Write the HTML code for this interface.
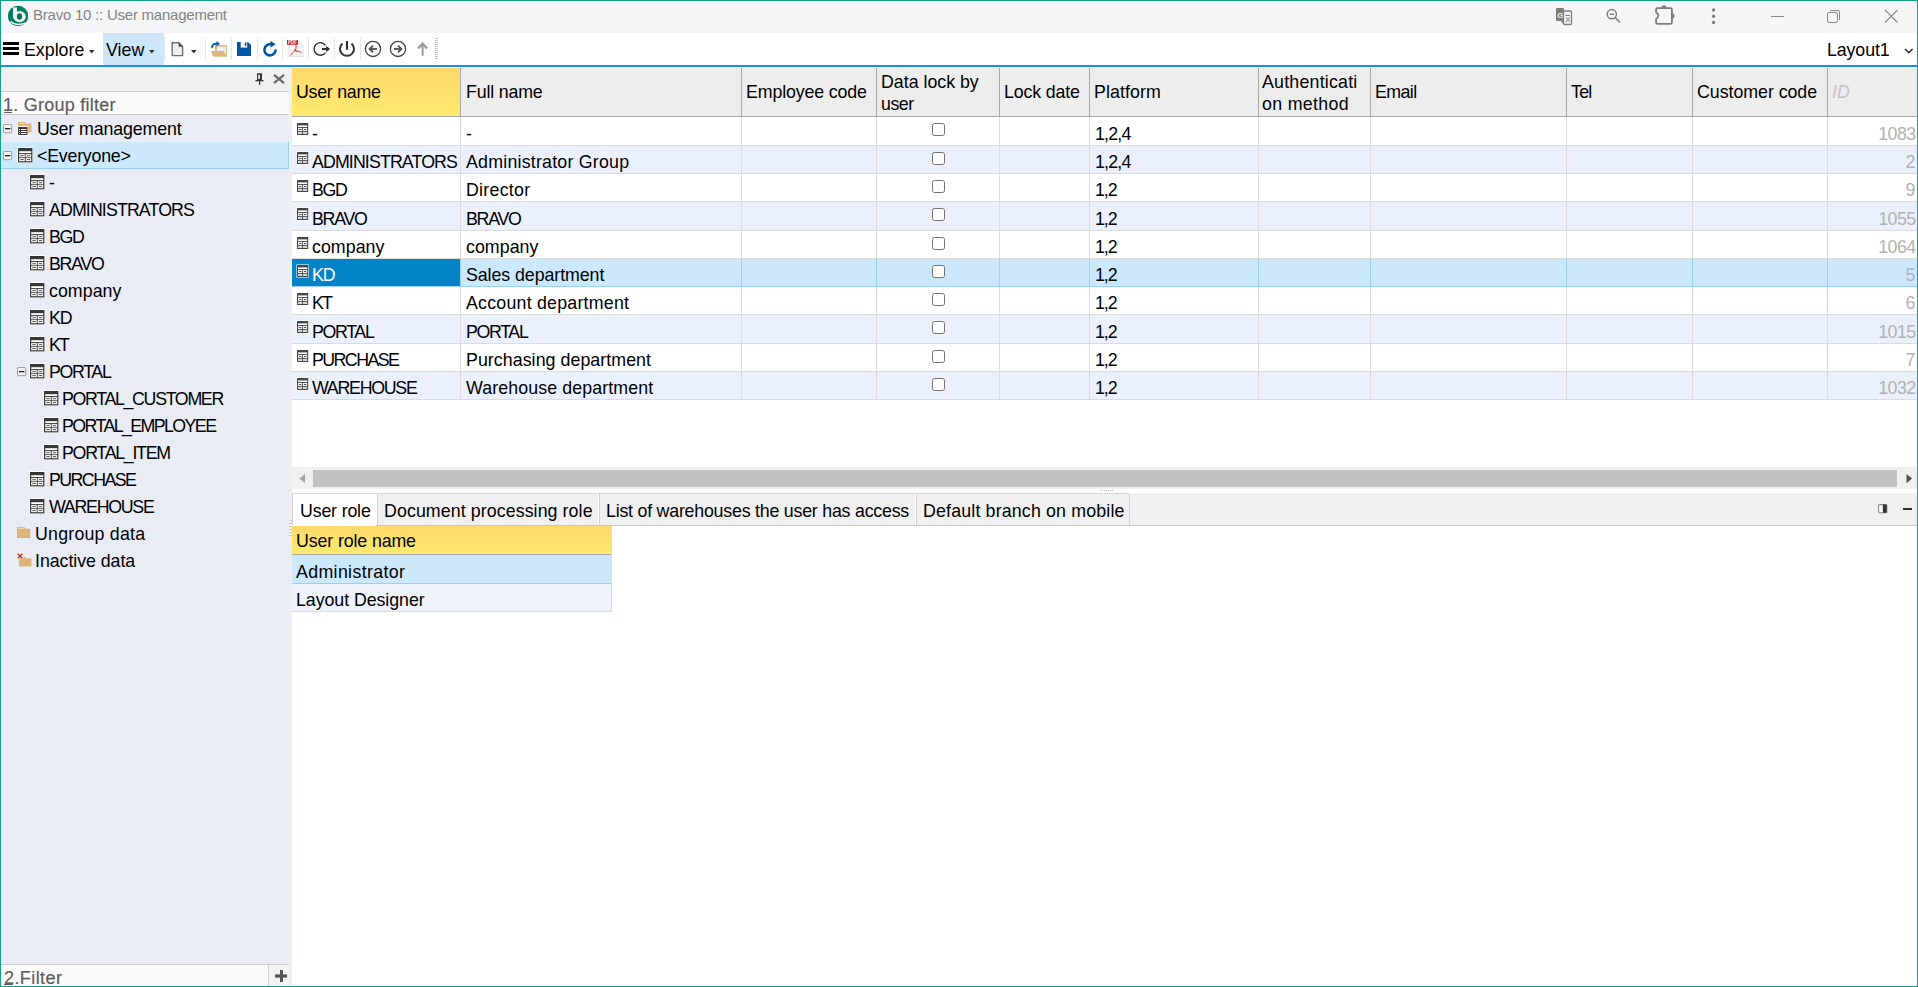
<!DOCTYPE html><html><head><meta charset="utf-8"><title>Bravo 10 :: User management</title><style>

*{box-sizing:border-box;margin:0;padding:0}
html,body{width:1918px;height:987px;overflow:hidden;background:#fff;font-family:"Liberation Sans",sans-serif;color:#000}
.abs{position:absolute}
.t{position:absolute;white-space:nowrap}
svg{overflow:visible}

</style></head><body>
<div class="abs" style="left:1px;top:1px;width:1916px;height:32px;background:#f4f5f7"></div>
<svg class="abs" style="left:7px;top:5px" width="22" height="22" viewBox="0 0 22 22">
<circle cx="11" cy="11" r="10.2" fill="#007a5e"/>
<path d="M11 1 A10 10 0 0 1 21 11 A10 10 0 0 1 18 18 L14 9 Z" fill="#008a68" opacity="0.6"/>
<ellipse cx="12.6" cy="11.6" rx="6.2" ry="5.6" fill="#f2f2f2"/>
<rect x="6" y="2.4" width="4" height="11" fill="#f2f2f2"/>
<ellipse cx="12.5" cy="11.5" rx="2.6" ry="3.3" fill="#00775b"/>
<path d="M3.5 16.5 Q9 21.5 18.5 18" stroke="#f2f2f2" stroke-width="1.6" fill="none"/>
</svg>
<div class="t" style="left:33px;top:4.00px;font-size:15px;line-height:22px;letter-spacing:-0.233px;color:#858585">Bravo 10 :: User management</div>
<svg class="abs" style="left:1555px;top:7px" width="18" height="18" viewBox="0 0 18 18">
<rect x="1" y="1" width="8" height="13" rx="1" fill="#7d7d7d"/>
<text x="2.2" y="10.5" font-size="8" font-family="Liberation Sans" fill="#f4f5f7" font-weight="bold" style="-webkit-font-smoothing:antialiased">G</text>
<rect x="8.5" y="4" width="8" height="13.5" rx="1" fill="#f4f5f7" stroke="#7d7d7d" stroke-width="1.3"/>
<path d="M10.5 8.5 H15 M12.7 8 V9 M11 10 L15 15 M15 10 L11 15" stroke="#7d7d7d" stroke-width="1" fill="none"/>
<path d="M6 14 L8.5 17.5 V14 Z" fill="#7d7d7d"/>
</svg>
<svg class="abs" style="left:1605px;top:8px" width="18" height="18" viewBox="0 0 18 18">
<circle cx="6.8" cy="6.2" r="4.6" stroke="#7d7d7d" stroke-width="1.5" fill="none"/>
<path d="M4.6 6.2 H9" stroke="#7d7d7d" stroke-width="1.5"/>
<path d="M10.2 9.6 L15 14.5" stroke="#7d7d7d" stroke-width="1.6"/>
</svg>
<svg class="abs" style="left:1650px;top:2px" width="26" height="26" viewBox="0 0 26 26">
<path d="M7.6 6.06 H20.4 Q21.9 6.06 21.9 7.56 V20.4 Q21.9 21.9 20.4 21.9 H7.6 Q6.1 21.9 6.1 20.4 V17.1 Q10.6 13.7 6.1 10.3 V7.56 Q6.1 6.06 7.6 6.06 Z" stroke="#7d7d7d" stroke-width="1.8" fill="none"/>
<path d="M12.2 6.06 A1.8 1.8 0 0 1 15.8 6.06 Z" fill="#7d7d7d" stroke="#7d7d7d" stroke-width="1.8" stroke-linejoin="round"/>
<path d="M21.9 12.2 A1.8 1.8 0 0 1 21.9 15.8 Z" fill="#7d7d7d" stroke="#7d7d7d" stroke-width="1.8" stroke-linejoin="round"/>
</svg>
<svg class="abs" style="left:1711px;top:8px" width="6" height="18" viewBox="0 0 6 18"><circle cx="2.6" cy="2" r="1.7" fill="#7d7d7d"/><circle cx="2.6" cy="8.3" r="1.7" fill="#7d7d7d"/><circle cx="2.6" cy="14.5" r="1.7" fill="#7d7d7d"/></svg>
<div class="abs" style="left:1771px;top:16px;width:13px;height:1px;background:#8a8a8a"></div>
<svg class="abs" style="left:1826px;top:9px" width="16" height="16" viewBox="0 0 16 16">
<rect x="1.5" y="3.5" width="10" height="10" rx="1.5" stroke="#8a8a8a" stroke-width="1" fill="none"/>
<path d="M4 1.5 H12 A1.5 1.5 0 0 1 13.5 3 V11" stroke="#8a8a8a" stroke-width="1" fill="none"/>
</svg>
<svg class="abs" style="left:1884px;top:9px" width="15" height="15" viewBox="0 0 15 15"><path d="M1 1 L13.5 13.5 M13.5 1 L1 13.5" stroke="#8a8a8a" stroke-width="1.1"/></svg>
<div class="abs" style="left:1px;top:33px;width:1916px;height:32px;background:#ffffff"></div>
<div class="abs" style="left:103px;top:33px;width:61px;height:32px;background:#cde6f9"></div>
<svg class="abs" style="left:3px;top:42px" width="16" height="13" viewBox="0 0 16 13"><rect x="0" y="0" width="16" height="3" fill="#000"/><rect x="0" y="5" width="16" height="3" fill="#000"/><rect x="0" y="10" width="16" height="3" fill="#000"/></svg>
<div class="t" style="left:24px;top:39.13px;font-size:17.8px;line-height:22px">Explore</div>
<svg class="abs" style="left:89px;top:50px" width="6" height="4" viewBox="0 0 6 4"><path d="M0 0 H5.5 L2.75 3.5 Z" fill="#333"/></svg>
<div class="t" style="left:106px;top:39.13px;font-size:17.8px;line-height:22px;letter-spacing:0.010px">View</div>
<svg class="abs" style="left:149px;top:50px" width="6" height="4" viewBox="0 0 6 4"><path d="M0 0 H5.5 L2.75 3.5 Z" fill="#333"/></svg>
<svg class="abs" style="left:171px;top:42px" width="13" height="15" viewBox="0 0 13 15">
<path d="M1.2 0.8 H8 L11.6 4.4 V13.6 H1.2 Z" fill="#f0f0f2" stroke="#6e6e6e" stroke-width="1.4" stroke-linejoin="round"/>
<path d="M7.6 0.8 L11.6 4.8 H7.6 Z" fill="#444"/>
</svg>
<svg class="abs" style="left:191px;top:50px" width="6" height="4" viewBox="0 0 6 4"><path d="M0 0 H5.6 L2.8 3.6 Z" fill="#333"/></svg>
<svg class="abs" style="left:164px;top:38px" width="2" height="22" viewBox="0 0 2 22"><rect x="0" y="0" width="1" height="1" fill="#cfcfcf"/><rect x="0" y="2" width="1" height="1" fill="#cfcfcf"/><rect x="0" y="4" width="1" height="1" fill="#cfcfcf"/><rect x="0" y="6" width="1" height="1" fill="#cfcfcf"/><rect x="0" y="8" width="1" height="1" fill="#cfcfcf"/><rect x="0" y="10" width="1" height="1" fill="#cfcfcf"/><rect x="0" y="12" width="1" height="1" fill="#cfcfcf"/><rect x="0" y="14" width="1" height="1" fill="#cfcfcf"/><rect x="0" y="16" width="1" height="1" fill="#cfcfcf"/><rect x="0" y="18" width="1" height="1" fill="#cfcfcf"/><rect x="0" y="20" width="1" height="1" fill="#cfcfcf"/></svg>
<svg class="abs" style="left:205px;top:38px" width="2" height="22" viewBox="0 0 2 22"><rect x="0" y="0" width="1" height="1" fill="#cfcfcf"/><rect x="0" y="2" width="1" height="1" fill="#cfcfcf"/><rect x="0" y="4" width="1" height="1" fill="#cfcfcf"/><rect x="0" y="6" width="1" height="1" fill="#cfcfcf"/><rect x="0" y="8" width="1" height="1" fill="#cfcfcf"/><rect x="0" y="10" width="1" height="1" fill="#cfcfcf"/><rect x="0" y="12" width="1" height="1" fill="#cfcfcf"/><rect x="0" y="14" width="1" height="1" fill="#cfcfcf"/><rect x="0" y="16" width="1" height="1" fill="#cfcfcf"/><rect x="0" y="18" width="1" height="1" fill="#cfcfcf"/><rect x="0" y="20" width="1" height="1" fill="#cfcfcf"/></svg>
<svg class="abs" style="left:231px;top:38px" width="2" height="22" viewBox="0 0 2 22"><rect x="0" y="0" width="1" height="1" fill="#cfcfcf"/><rect x="0" y="2" width="1" height="1" fill="#cfcfcf"/><rect x="0" y="4" width="1" height="1" fill="#cfcfcf"/><rect x="0" y="6" width="1" height="1" fill="#cfcfcf"/><rect x="0" y="8" width="1" height="1" fill="#cfcfcf"/><rect x="0" y="10" width="1" height="1" fill="#cfcfcf"/><rect x="0" y="12" width="1" height="1" fill="#cfcfcf"/><rect x="0" y="14" width="1" height="1" fill="#cfcfcf"/><rect x="0" y="16" width="1" height="1" fill="#cfcfcf"/><rect x="0" y="18" width="1" height="1" fill="#cfcfcf"/><rect x="0" y="20" width="1" height="1" fill="#cfcfcf"/></svg>
<svg class="abs" style="left:257px;top:38px" width="2" height="22" viewBox="0 0 2 22"><rect x="0" y="0" width="1" height="1" fill="#cfcfcf"/><rect x="0" y="2" width="1" height="1" fill="#cfcfcf"/><rect x="0" y="4" width="1" height="1" fill="#cfcfcf"/><rect x="0" y="6" width="1" height="1" fill="#cfcfcf"/><rect x="0" y="8" width="1" height="1" fill="#cfcfcf"/><rect x="0" y="10" width="1" height="1" fill="#cfcfcf"/><rect x="0" y="12" width="1" height="1" fill="#cfcfcf"/><rect x="0" y="14" width="1" height="1" fill="#cfcfcf"/><rect x="0" y="16" width="1" height="1" fill="#cfcfcf"/><rect x="0" y="18" width="1" height="1" fill="#cfcfcf"/><rect x="0" y="20" width="1" height="1" fill="#cfcfcf"/></svg>
<svg class="abs" style="left:282px;top:38px" width="2" height="22" viewBox="0 0 2 22"><rect x="0" y="0" width="1" height="1" fill="#cfcfcf"/><rect x="0" y="2" width="1" height="1" fill="#cfcfcf"/><rect x="0" y="4" width="1" height="1" fill="#cfcfcf"/><rect x="0" y="6" width="1" height="1" fill="#cfcfcf"/><rect x="0" y="8" width="1" height="1" fill="#cfcfcf"/><rect x="0" y="10" width="1" height="1" fill="#cfcfcf"/><rect x="0" y="12" width="1" height="1" fill="#cfcfcf"/><rect x="0" y="14" width="1" height="1" fill="#cfcfcf"/><rect x="0" y="16" width="1" height="1" fill="#cfcfcf"/><rect x="0" y="18" width="1" height="1" fill="#cfcfcf"/><rect x="0" y="20" width="1" height="1" fill="#cfcfcf"/></svg>
<svg class="abs" style="left:308px;top:38px" width="2" height="22" viewBox="0 0 2 22"><rect x="0" y="0" width="1" height="1" fill="#cfcfcf"/><rect x="0" y="2" width="1" height="1" fill="#cfcfcf"/><rect x="0" y="4" width="1" height="1" fill="#cfcfcf"/><rect x="0" y="6" width="1" height="1" fill="#cfcfcf"/><rect x="0" y="8" width="1" height="1" fill="#cfcfcf"/><rect x="0" y="10" width="1" height="1" fill="#cfcfcf"/><rect x="0" y="12" width="1" height="1" fill="#cfcfcf"/><rect x="0" y="14" width="1" height="1" fill="#cfcfcf"/><rect x="0" y="16" width="1" height="1" fill="#cfcfcf"/><rect x="0" y="18" width="1" height="1" fill="#cfcfcf"/><rect x="0" y="20" width="1" height="1" fill="#cfcfcf"/></svg>
<svg class="abs" style="left:334px;top:38px" width="2" height="22" viewBox="0 0 2 22"><rect x="0" y="0" width="1" height="1" fill="#cfcfcf"/><rect x="0" y="2" width="1" height="1" fill="#cfcfcf"/><rect x="0" y="4" width="1" height="1" fill="#cfcfcf"/><rect x="0" y="6" width="1" height="1" fill="#cfcfcf"/><rect x="0" y="8" width="1" height="1" fill="#cfcfcf"/><rect x="0" y="10" width="1" height="1" fill="#cfcfcf"/><rect x="0" y="12" width="1" height="1" fill="#cfcfcf"/><rect x="0" y="14" width="1" height="1" fill="#cfcfcf"/><rect x="0" y="16" width="1" height="1" fill="#cfcfcf"/><rect x="0" y="18" width="1" height="1" fill="#cfcfcf"/><rect x="0" y="20" width="1" height="1" fill="#cfcfcf"/></svg>
<svg class="abs" style="left:360px;top:38px" width="2" height="22" viewBox="0 0 2 22"><rect x="0" y="0" width="1" height="1" fill="#cfcfcf"/><rect x="0" y="2" width="1" height="1" fill="#cfcfcf"/><rect x="0" y="4" width="1" height="1" fill="#cfcfcf"/><rect x="0" y="6" width="1" height="1" fill="#cfcfcf"/><rect x="0" y="8" width="1" height="1" fill="#cfcfcf"/><rect x="0" y="10" width="1" height="1" fill="#cfcfcf"/><rect x="0" y="12" width="1" height="1" fill="#cfcfcf"/><rect x="0" y="14" width="1" height="1" fill="#cfcfcf"/><rect x="0" y="16" width="1" height="1" fill="#cfcfcf"/><rect x="0" y="18" width="1" height="1" fill="#cfcfcf"/><rect x="0" y="20" width="1" height="1" fill="#cfcfcf"/></svg>
<svg class="abs" style="left:210px;top:40px" width="18" height="18" viewBox="0 0 18 18">
<path d="M5 5 H17 V16.5 H5 Z" fill="#ddb77c"/>
<path d="M7 6.5 H16 V15 H7 Z" fill="#efeff2"/>
<path d="M1 11 H13.5 L16.8 16.6 H3 Z" fill="#ddb77c"/>
<path d="M2.2 8 C1.5 5 4 3.2 7.5 3.8" stroke="#0a5cb0" stroke-width="2" fill="none"/>
<path d="M6.5 1 L10 3.8 L6.5 6.5 Z" fill="#0a5cb0"/>
</svg>
<svg class="abs" style="left:237px;top:42px" width="14" height="14" viewBox="0 0 14 14">
<path d="M0 0 H11 L14 3 V14 H0 Z" fill="#0055a5"/>
<rect x="3.7" y="0" width="6.5" height="5.6" fill="#fbfbfb"/>
<rect x="7.8" y="0.5" width="1.6" height="3.3" fill="#0055a5"/>
</svg>
<svg class="abs" style="left:263px;top:40px" width="16" height="18" viewBox="0 0 16 18">
<path d="M12.6 9.5 A5.6 5.6 0 1 1 8 4.3" stroke="#0055a5" stroke-width="2.6" fill="none"/>
<path d="M7.5 0.8 L12.5 4.3 L7.5 7.8 Z" fill="#0055a5"/>
</svg>
<svg class="abs" style="left:286px;top:40px" width="18" height="18" viewBox="0 0 18 18">
<path d="M3 1 H13 L17 5 V16.6 H3 Z" fill="#f3f3f3" stroke="#d5d5d5" stroke-width="0.8"/>
<rect x="1" y="0" width="11" height="4.7" fill="#c8101a"/>
<text x="2" y="4.2" font-size="4.5" font-family="Liberation Sans" font-weight="bold" fill="#fff">PDF</text>
<path d="M10 5 Q10.5 9 9 10.5 Q6 13 4.5 15.5 M9 10.5 Q12 11 15.5 12.5 M8 9.5 Q9.5 11 11 12" stroke="#e8242c" stroke-width="0.9" fill="none"/>
</svg>
<svg class="abs" style="left:313px;top:41px" width="18" height="16" viewBox="0 0 18 16">
<path d="M12.5 4.3 A6.3 6.3 0 1 0 12.5 11.6" stroke="#333" stroke-width="1.4" fill="none"/>
<path d="M9 8 H16" stroke="#333" stroke-width="2.2"/>
<path d="M13.2 4.8 L17 8 L13.2 11.2 Z" fill="#333"/>
</svg>
<svg class="abs" style="left:338px;top:40px" width="18" height="18" viewBox="0 0 18 18">
<path d="M4.5 3.5 A7 7 0 1 0 13.5 3.5" stroke="#333" stroke-width="2" fill="none"/>
<path d="M9 1 V9.8" stroke="#333" stroke-width="2.1"/>
</svg>
<svg class="abs" style="left:364px;top:40px" width="18" height="18" viewBox="0 0 18 18">
<circle cx="9" cy="8.9" r="7.6" stroke="#444" stroke-width="1.3" fill="none"/>
<path d="M6.5 8.9 H13" stroke="#555" stroke-width="2"/>
<path d="M9 5.6 L5.6 8.9 L9 12.2" stroke="#555" stroke-width="1.9" fill="none"/>
</svg>
<svg class="abs" style="left:389px;top:40px" width="18" height="18" viewBox="0 0 18 18">
<circle cx="9" cy="8.9" r="7.6" stroke="#444" stroke-width="1.3" fill="none"/>
<path d="M5 8.9 H11.5" stroke="#555" stroke-width="2"/>
<path d="M9 5.6 L12.4 8.9 L9 12.2" stroke="#555" stroke-width="1.9" fill="none"/>
</svg>
<svg class="abs" style="left:417px;top:42px" width="12" height="15" viewBox="0 0 12 15">
<path d="M5.6 2 V13.8" stroke="#9a9a9a" stroke-width="2"/>
<path d="M1.2 6.5 L5.6 1.5 L10 6.5" stroke="#9a9a9a" stroke-width="2.2" fill="none"/>
</svg>
<svg class="abs" style="left:435px;top:38px" width="3" height="22" viewBox="0 0 3 22"><rect x="0" y="0" width="3" height="1" fill="#c4c4c4"/><rect x="0" y="2" width="3" height="1" fill="#c4c4c4"/><rect x="0" y="4" width="3" height="1" fill="#c4c4c4"/><rect x="0" y="6" width="3" height="1" fill="#c4c4c4"/><rect x="0" y="8" width="3" height="1" fill="#c4c4c4"/><rect x="0" y="10" width="3" height="1" fill="#c4c4c4"/><rect x="0" y="12" width="3" height="1" fill="#c4c4c4"/><rect x="0" y="14" width="3" height="1" fill="#c4c4c4"/><rect x="0" y="16" width="3" height="1" fill="#c4c4c4"/><rect x="0" y="18" width="3" height="1" fill="#c4c4c4"/><rect x="0" y="20" width="3" height="1" fill="#c4c4c4"/></svg>
<div class="t" style="left:1827px;top:39.13px;font-size:17.8px;line-height:22px;letter-spacing:-0.105px">Layout1</div>
<svg class="abs" style="left:1904px;top:48px" width="10" height="6" viewBox="0 0 10 6"><path d="M1 1 L4.8 4.6 L8.6 1" stroke="#111" stroke-width="1.3" fill="none"/></svg>
<div class="abs" style="left:1px;top:65px;width:1916px;height:2px;background:#1a8cf2"></div>
<div class="abs" style="left:1px;top:67px;width:288px;height:24px;background:#f0f0f0"></div>
<div class="abs" style="left:1px;top:91px;width:288px;height:1px;background:#cdcdcd"></div>
<svg class="abs" style="left:255px;top:73px" width="10" height="13" viewBox="0 0 10 13">
<rect x="2" y="0.3" width="5" height="7" fill="#333"/>
<rect x="3.2" y="1.8" width="1.6" height="4.2" fill="#fff"/>
<rect x="0.5" y="7" width="8" height="1.3" fill="#333"/>
<rect x="4" y="8" width="1.2" height="4" fill="#333"/>
</svg>
<svg class="abs" style="left:273px;top:74px" width="12" height="10" viewBox="0 0 12 10"><path d="M1 0.8 L11 9.2 M11 0.8 L1 9.2" stroke="#6a6a6a" stroke-width="2.2"/></svg>
<div class="abs" style="left:1px;top:92px;width:288px;height:22px;background:#fafafa"></div>
<div class="abs" style="left:1px;top:114px;width:288px;height:1px;background:#cdcdcd"></div>
<div class="t" style="left:3px;top:93.76px;font-size:18px;line-height:22px;letter-spacing:0.251px;color:#5e5e5e;-webkit-text-stroke:0.2px #606060">1. Group filter</div>
<div class="abs" style="left:4px;top:112px;width:8px;height:1px;background:#5e5e5e"></div>
<div class="abs" style="left:1px;top:115px;width:288px;height:849px;background:#e9ecf4"></div>
<div class="abs" style="left:1px;top:964px;width:288px;height:1px;background:#cdcdcd"></div>
<div class="abs" style="left:1px;top:965px;width:288px;height:21px;background:#fafafa"></div>
<div class="t" style="left:4px;top:967.16px;font-size:18px;line-height:22px;letter-spacing:0.412px;color:#5e5e5e;-webkit-text-stroke:0.2px #606060">2.Filter</div>
<div class="abs" style="left:4px;top:984px;width:9px;height:1px;background:#5e5e5e"></div>
<div class="abs" style="left:268px;top:965px;width:1px;height:21px;background:#cdcdcd"></div>
<div class="abs" style="left:269px;top:965px;width:20px;height:21px;background:#f4f4f4"></div>
<svg class="abs" style="left:275px;top:970px" width="13" height="13" viewBox="0 0 13 13"><rect x="0" y="4.4" width="12" height="3.2" fill="#555"/><rect x="5" y="0" width="3" height="12" fill="#555"/></svg>
<div class="abs" style="left:289px;top:67px;width:3px;height:919px;background:#efefef"></div>
<svg class="abs" style="left:3px;top:124px" width="9" height="9" viewBox="0 0 9 9">
<rect x="0.5" y="0.5" width="8.2" height="8.2" rx="0.8" fill="#f2f2f2" stroke="#9d9d9d" stroke-width="1"/>
<rect x="2" y="4" width="5.4" height="1.3" fill="#222"/>
</svg>
<svg class="abs" style="left:18px;top:121px" width="15" height="15" viewBox="0 0 15 15">
<path d="M0 1 H7 L8 2.5 H13.4 V11.5 H0 Z" fill="#ddb77c"/>
<rect x="1" y="1.8" width="5.5" height="1" fill="#efd9b0"/>
<rect x="-1" y="5" width="11" height="10" fill="#fff" opacity="0.9"/>
<rect x="0" y="6" width="9.5" height="8" rx="0.5" fill="#383838"/>
<rect x="1" y="8" width="1" height="1" fill="#fff"/><rect x="3" y="8" width="5.5" height="1" fill="#fff"/>
<rect x="1" y="10" width="1" height="1" fill="#fff"/><rect x="3" y="10" width="5.5" height="1" fill="#fff"/>
<rect x="1" y="12" width="1" height="1" fill="#fff"/><rect x="3" y="12" width="5.5" height="1" fill="#fff"/>
</svg>
<div class="t" style="left:37px;top:117.83px;font-size:17.8px;line-height:22px;letter-spacing:-0.108px">User management</div>
<div class="abs" style="left:1px;top:142px;width:288px;height:27px;background:#cce8fb;border-bottom:1px solid #99d1f5;border-right:1px solid #99d1f5"></div>
<svg class="abs" style="left:3px;top:151px" width="9" height="9" viewBox="0 0 9 9">
<rect x="0.5" y="0.5" width="8.2" height="8.2" rx="0.8" fill="#f2f2f2" stroke="#9d9d9d" stroke-width="1"/>
<rect x="2" y="4" width="5.4" height="1.3" fill="#222"/>
</svg>
<svg class="abs" style="left:18px;top:148px" width="15" height="15" viewBox="0 0 15 15">
<rect x="-1" y="-1" width="16" height="16" fill="#fff" opacity="0.85"/>
<rect x="0" y="0" width="14.4" height="14.4" fill="#383838"/>
<rect x="1.2" y="3.2" width="12" height="1.9" fill="#fff"/>
<rect x="1.2" y="6.1" width="5.6" height="3.2" fill="#fff"/>
<rect x="7.7" y="6.1" width="5.5" height="3.2" fill="#fff"/>
<rect x="1.2" y="10.1" width="5.6" height="3.1" fill="#fff"/>
<rect x="7.7" y="10.1" width="5.5" height="3.1" fill="#fff"/>
<rect x="2.3" y="7.3" width="3.4" height="0.9" fill="#383838"/>
<rect x="8.8" y="7.3" width="3.4" height="0.9" fill="#383838"/>
<rect x="2.3" y="11.2" width="3.4" height="0.9" fill="#383838"/>
<rect x="8.8" y="11.2" width="3.4" height="0.9" fill="#383838"/>
</svg>
<div class="t" style="left:37px;top:144.83px;font-size:17.8px;line-height:22px;letter-spacing:-0.219px">&lt;Everyone&gt;</div>
<svg class="abs" style="left:30px;top:175px" width="15" height="15" viewBox="0 0 15 15">
<rect x="-1" y="-1" width="16" height="16" fill="#fff" opacity="0.85"/>
<rect x="0" y="0" width="14.4" height="14.4" fill="#383838"/>
<rect x="1.2" y="3.2" width="12" height="1.9" fill="#fff"/>
<rect x="1.2" y="6.1" width="5.6" height="3.2" fill="#fff"/>
<rect x="7.7" y="6.1" width="5.5" height="3.2" fill="#fff"/>
<rect x="1.2" y="10.1" width="5.6" height="3.1" fill="#fff"/>
<rect x="7.7" y="10.1" width="5.5" height="3.1" fill="#fff"/>
<rect x="2.3" y="7.3" width="3.4" height="0.9" fill="#383838"/>
<rect x="8.8" y="7.3" width="3.4" height="0.9" fill="#383838"/>
<rect x="2.3" y="11.2" width="3.4" height="0.9" fill="#383838"/>
<rect x="8.8" y="11.2" width="3.4" height="0.9" fill="#383838"/>
</svg>
<div class="t" style="left:49px;top:171.83px;font-size:17.8px;line-height:22px">-</div>
<svg class="abs" style="left:30px;top:202px" width="15" height="15" viewBox="0 0 15 15">
<rect x="-1" y="-1" width="16" height="16" fill="#fff" opacity="0.85"/>
<rect x="0" y="0" width="14.4" height="14.4" fill="#383838"/>
<rect x="1.2" y="3.2" width="12" height="1.9" fill="#fff"/>
<rect x="1.2" y="6.1" width="5.6" height="3.2" fill="#fff"/>
<rect x="7.7" y="6.1" width="5.5" height="3.2" fill="#fff"/>
<rect x="1.2" y="10.1" width="5.6" height="3.1" fill="#fff"/>
<rect x="7.7" y="10.1" width="5.5" height="3.1" fill="#fff"/>
<rect x="2.3" y="7.3" width="3.4" height="0.9" fill="#383838"/>
<rect x="8.8" y="7.3" width="3.4" height="0.9" fill="#383838"/>
<rect x="2.3" y="11.2" width="3.4" height="0.9" fill="#383838"/>
<rect x="8.8" y="11.2" width="3.4" height="0.9" fill="#383838"/>
</svg>
<div class="t" style="left:49px;top:198.83px;font-size:17.8px;line-height:22px;letter-spacing:-0.884px">ADMINISTRATORS</div>
<svg class="abs" style="left:30px;top:229px" width="15" height="15" viewBox="0 0 15 15">
<rect x="-1" y="-1" width="16" height="16" fill="#fff" opacity="0.85"/>
<rect x="0" y="0" width="14.4" height="14.4" fill="#383838"/>
<rect x="1.2" y="3.2" width="12" height="1.9" fill="#fff"/>
<rect x="1.2" y="6.1" width="5.6" height="3.2" fill="#fff"/>
<rect x="7.7" y="6.1" width="5.5" height="3.2" fill="#fff"/>
<rect x="1.2" y="10.1" width="5.6" height="3.1" fill="#fff"/>
<rect x="7.7" y="10.1" width="5.5" height="3.1" fill="#fff"/>
<rect x="2.3" y="7.3" width="3.4" height="0.9" fill="#383838"/>
<rect x="8.8" y="7.3" width="3.4" height="0.9" fill="#383838"/>
<rect x="2.3" y="11.2" width="3.4" height="0.9" fill="#383838"/>
<rect x="8.8" y="11.2" width="3.4" height="0.9" fill="#383838"/>
</svg>
<div class="t" style="left:49px;top:225.83px;font-size:17.8px;line-height:22px;letter-spacing:-1.358px">BGD</div>
<svg class="abs" style="left:30px;top:256px" width="15" height="15" viewBox="0 0 15 15">
<rect x="-1" y="-1" width="16" height="16" fill="#fff" opacity="0.85"/>
<rect x="0" y="0" width="14.4" height="14.4" fill="#383838"/>
<rect x="1.2" y="3.2" width="12" height="1.9" fill="#fff"/>
<rect x="1.2" y="6.1" width="5.6" height="3.2" fill="#fff"/>
<rect x="7.7" y="6.1" width="5.5" height="3.2" fill="#fff"/>
<rect x="1.2" y="10.1" width="5.6" height="3.1" fill="#fff"/>
<rect x="7.7" y="10.1" width="5.5" height="3.1" fill="#fff"/>
<rect x="2.3" y="7.3" width="3.4" height="0.9" fill="#383838"/>
<rect x="8.8" y="7.3" width="3.4" height="0.9" fill="#383838"/>
<rect x="2.3" y="11.2" width="3.4" height="0.9" fill="#383838"/>
<rect x="8.8" y="11.2" width="3.4" height="0.9" fill="#383838"/>
</svg>
<div class="t" style="left:49px;top:252.83px;font-size:17.8px;line-height:22px;letter-spacing:-1.260px">BRAVO</div>
<svg class="abs" style="left:30px;top:283px" width="15" height="15" viewBox="0 0 15 15">
<rect x="-1" y="-1" width="16" height="16" fill="#fff" opacity="0.85"/>
<rect x="0" y="0" width="14.4" height="14.4" fill="#383838"/>
<rect x="1.2" y="3.2" width="12" height="1.9" fill="#fff"/>
<rect x="1.2" y="6.1" width="5.6" height="3.2" fill="#fff"/>
<rect x="7.7" y="6.1" width="5.5" height="3.2" fill="#fff"/>
<rect x="1.2" y="10.1" width="5.6" height="3.1" fill="#fff"/>
<rect x="7.7" y="10.1" width="5.5" height="3.1" fill="#fff"/>
<rect x="2.3" y="7.3" width="3.4" height="0.9" fill="#383838"/>
<rect x="8.8" y="7.3" width="3.4" height="0.9" fill="#383838"/>
<rect x="2.3" y="11.2" width="3.4" height="0.9" fill="#383838"/>
<rect x="8.8" y="11.2" width="3.4" height="0.9" fill="#383838"/>
</svg>
<div class="t" style="left:49px;top:279.83px;font-size:17.8px;line-height:22px;letter-spacing:0.040px">company</div>
<svg class="abs" style="left:30px;top:310px" width="15" height="15" viewBox="0 0 15 15">
<rect x="-1" y="-1" width="16" height="16" fill="#fff" opacity="0.85"/>
<rect x="0" y="0" width="14.4" height="14.4" fill="#383838"/>
<rect x="1.2" y="3.2" width="12" height="1.9" fill="#fff"/>
<rect x="1.2" y="6.1" width="5.6" height="3.2" fill="#fff"/>
<rect x="7.7" y="6.1" width="5.5" height="3.2" fill="#fff"/>
<rect x="1.2" y="10.1" width="5.6" height="3.1" fill="#fff"/>
<rect x="7.7" y="10.1" width="5.5" height="3.1" fill="#fff"/>
<rect x="2.3" y="7.3" width="3.4" height="0.9" fill="#383838"/>
<rect x="8.8" y="7.3" width="3.4" height="0.9" fill="#383838"/>
<rect x="2.3" y="11.2" width="3.4" height="0.9" fill="#383838"/>
<rect x="8.8" y="11.2" width="3.4" height="0.9" fill="#383838"/>
</svg>
<div class="t" style="left:49px;top:306.83px;font-size:17.8px;line-height:22px;letter-spacing:-1.164px">KD</div>
<svg class="abs" style="left:30px;top:337px" width="15" height="15" viewBox="0 0 15 15">
<rect x="-1" y="-1" width="16" height="16" fill="#fff" opacity="0.85"/>
<rect x="0" y="0" width="14.4" height="14.4" fill="#383838"/>
<rect x="1.2" y="3.2" width="12" height="1.9" fill="#fff"/>
<rect x="1.2" y="6.1" width="5.6" height="3.2" fill="#fff"/>
<rect x="7.7" y="6.1" width="5.5" height="3.2" fill="#fff"/>
<rect x="1.2" y="10.1" width="5.6" height="3.1" fill="#fff"/>
<rect x="7.7" y="10.1" width="5.5" height="3.1" fill="#fff"/>
<rect x="2.3" y="7.3" width="3.4" height="0.9" fill="#383838"/>
<rect x="8.8" y="7.3" width="3.4" height="0.9" fill="#383838"/>
<rect x="2.3" y="11.2" width="3.4" height="0.9" fill="#383838"/>
<rect x="8.8" y="11.2" width="3.4" height="0.9" fill="#383838"/>
</svg>
<div class="t" style="left:49px;top:333.83px;font-size:17.8px;line-height:22px;letter-spacing:-1.823px">KT</div>
<svg class="abs" style="left:17px;top:367px" width="9" height="9" viewBox="0 0 9 9">
<rect x="0.5" y="0.5" width="8.2" height="8.2" rx="0.8" fill="#f2f2f2" stroke="#9d9d9d" stroke-width="1"/>
<rect x="2" y="4" width="5.4" height="1.3" fill="#222"/>
</svg>
<svg class="abs" style="left:30px;top:364px" width="15" height="15" viewBox="0 0 15 15">
<rect x="-1" y="-1" width="16" height="16" fill="#fff" opacity="0.85"/>
<rect x="0" y="0" width="14.4" height="14.4" fill="#383838"/>
<rect x="1.2" y="3.2" width="12" height="1.9" fill="#fff"/>
<rect x="1.2" y="6.1" width="5.6" height="3.2" fill="#fff"/>
<rect x="7.7" y="6.1" width="5.5" height="3.2" fill="#fff"/>
<rect x="1.2" y="10.1" width="5.6" height="3.1" fill="#fff"/>
<rect x="7.7" y="10.1" width="5.5" height="3.1" fill="#fff"/>
<rect x="2.3" y="7.3" width="3.4" height="0.9" fill="#383838"/>
<rect x="8.8" y="7.3" width="3.4" height="0.9" fill="#383838"/>
<rect x="2.3" y="11.2" width="3.4" height="0.9" fill="#383838"/>
<rect x="8.8" y="11.2" width="3.4" height="0.9" fill="#383838"/>
</svg>
<div class="t" style="left:49px;top:360.83px;font-size:17.8px;line-height:22px;letter-spacing:-1.345px">PORTAL</div>
<svg class="abs" style="left:44px;top:391px" width="15" height="15" viewBox="0 0 15 15">
<rect x="-1" y="-1" width="16" height="16" fill="#fff" opacity="0.85"/>
<rect x="0" y="0" width="14.4" height="14.4" fill="#383838"/>
<rect x="1.2" y="3.2" width="12" height="1.9" fill="#fff"/>
<rect x="1.2" y="6.1" width="5.6" height="3.2" fill="#fff"/>
<rect x="7.7" y="6.1" width="5.5" height="3.2" fill="#fff"/>
<rect x="1.2" y="10.1" width="5.6" height="3.1" fill="#fff"/>
<rect x="7.7" y="10.1" width="5.5" height="3.1" fill="#fff"/>
<rect x="2.3" y="7.3" width="3.4" height="0.9" fill="#383838"/>
<rect x="8.8" y="7.3" width="3.4" height="0.9" fill="#383838"/>
<rect x="2.3" y="11.2" width="3.4" height="0.9" fill="#383838"/>
<rect x="8.8" y="11.2" width="3.4" height="0.9" fill="#383838"/>
</svg>
<div class="t" style="left:62px;top:387.83px;font-size:17.8px;line-height:22px;letter-spacing:-1.327px">PORTAL_CUSTOMER</div>
<svg class="abs" style="left:44px;top:418px" width="15" height="15" viewBox="0 0 15 15">
<rect x="-1" y="-1" width="16" height="16" fill="#fff" opacity="0.85"/>
<rect x="0" y="0" width="14.4" height="14.4" fill="#383838"/>
<rect x="1.2" y="3.2" width="12" height="1.9" fill="#fff"/>
<rect x="1.2" y="6.1" width="5.6" height="3.2" fill="#fff"/>
<rect x="7.7" y="6.1" width="5.5" height="3.2" fill="#fff"/>
<rect x="1.2" y="10.1" width="5.6" height="3.1" fill="#fff"/>
<rect x="7.7" y="10.1" width="5.5" height="3.1" fill="#fff"/>
<rect x="2.3" y="7.3" width="3.4" height="0.9" fill="#383838"/>
<rect x="8.8" y="7.3" width="3.4" height="0.9" fill="#383838"/>
<rect x="2.3" y="11.2" width="3.4" height="0.9" fill="#383838"/>
<rect x="8.8" y="11.2" width="3.4" height="0.9" fill="#383838"/>
</svg>
<div class="t" style="left:62px;top:414.83px;font-size:17.8px;line-height:22px;letter-spacing:-1.587px">PORTAL_EMPLOYEE</div>
<svg class="abs" style="left:44px;top:445px" width="15" height="15" viewBox="0 0 15 15">
<rect x="-1" y="-1" width="16" height="16" fill="#fff" opacity="0.85"/>
<rect x="0" y="0" width="14.4" height="14.4" fill="#383838"/>
<rect x="1.2" y="3.2" width="12" height="1.9" fill="#fff"/>
<rect x="1.2" y="6.1" width="5.6" height="3.2" fill="#fff"/>
<rect x="7.7" y="6.1" width="5.5" height="3.2" fill="#fff"/>
<rect x="1.2" y="10.1" width="5.6" height="3.1" fill="#fff"/>
<rect x="7.7" y="10.1" width="5.5" height="3.1" fill="#fff"/>
<rect x="2.3" y="7.3" width="3.4" height="0.9" fill="#383838"/>
<rect x="8.8" y="7.3" width="3.4" height="0.9" fill="#383838"/>
<rect x="2.3" y="11.2" width="3.4" height="0.9" fill="#383838"/>
<rect x="8.8" y="11.2" width="3.4" height="0.9" fill="#383838"/>
</svg>
<div class="t" style="left:62px;top:441.83px;font-size:17.8px;line-height:22px;letter-spacing:-1.281px">PORTAL_ITEM</div>
<svg class="abs" style="left:30px;top:472px" width="15" height="15" viewBox="0 0 15 15">
<rect x="-1" y="-1" width="16" height="16" fill="#fff" opacity="0.85"/>
<rect x="0" y="0" width="14.4" height="14.4" fill="#383838"/>
<rect x="1.2" y="3.2" width="12" height="1.9" fill="#fff"/>
<rect x="1.2" y="6.1" width="5.6" height="3.2" fill="#fff"/>
<rect x="7.7" y="6.1" width="5.5" height="3.2" fill="#fff"/>
<rect x="1.2" y="10.1" width="5.6" height="3.1" fill="#fff"/>
<rect x="7.7" y="10.1" width="5.5" height="3.1" fill="#fff"/>
<rect x="2.3" y="7.3" width="3.4" height="0.9" fill="#383838"/>
<rect x="8.8" y="7.3" width="3.4" height="0.9" fill="#383838"/>
<rect x="2.3" y="11.2" width="3.4" height="0.9" fill="#383838"/>
<rect x="8.8" y="11.2" width="3.4" height="0.9" fill="#383838"/>
</svg>
<div class="t" style="left:49px;top:468.83px;font-size:17.8px;line-height:22px;letter-spacing:-1.564px">PURCHASE</div>
<svg class="abs" style="left:30px;top:499px" width="15" height="15" viewBox="0 0 15 15">
<rect x="-1" y="-1" width="16" height="16" fill="#fff" opacity="0.85"/>
<rect x="0" y="0" width="14.4" height="14.4" fill="#383838"/>
<rect x="1.2" y="3.2" width="12" height="1.9" fill="#fff"/>
<rect x="1.2" y="6.1" width="5.6" height="3.2" fill="#fff"/>
<rect x="7.7" y="6.1" width="5.5" height="3.2" fill="#fff"/>
<rect x="1.2" y="10.1" width="5.6" height="3.1" fill="#fff"/>
<rect x="7.7" y="10.1" width="5.5" height="3.1" fill="#fff"/>
<rect x="2.3" y="7.3" width="3.4" height="0.9" fill="#383838"/>
<rect x="8.8" y="7.3" width="3.4" height="0.9" fill="#383838"/>
<rect x="2.3" y="11.2" width="3.4" height="0.9" fill="#383838"/>
<rect x="8.8" y="11.2" width="3.4" height="0.9" fill="#383838"/>
</svg>
<div class="t" style="left:49px;top:495.83px;font-size:17.8px;line-height:22px;letter-spacing:-1.261px">WAREHOUSE</div>
<svg class="abs" style="left:17px;top:527px" width="14" height="12" viewBox="0 0 14 12"><path d="M0 0 H7.5 L8.5 1.8 H13.3 V11 H0 Z" fill="#dcb478"/><rect x="1" y="0.8" width="6" height="0.9" fill="#f1dfbf"/></svg>
<div class="t" style="left:35px;top:522.83px;font-size:17.8px;line-height:22px;letter-spacing:0.212px">Ungroup data</div>
<svg class="abs" style="left:17px;top:553px" width="15" height="14" viewBox="0 0 15 14">
<path d="M2 4 H8.5 L9.5 5.5 H14.4 V13.4 H2 Z" fill="#dcb478"/>
<path d="M0.6 0.6 L5.6 5.4 M5.6 0.6 L0.6 5.4" stroke="#fff" stroke-width="2.6"/>
<path d="M0.8 0.8 L5.4 5.2 M5.4 0.8 L0.8 5.2" stroke="#b5301f" stroke-width="1.5"/>
</svg>
<div class="t" style="left:35px;top:549.83px;font-size:17.8px;line-height:22px;letter-spacing:-0.056px">Inactive data</div>
<div class="abs" style="left:292px;top:67px;width:1625px;height:1px;background:#ffffff"></div>
<div class="abs" style="left:292px;top:68px;width:1625px;height:48px;background:#ededed"></div>
<div class="abs" style="left:292px;top:68px;width:168px;height:48px;background:linear-gradient(#fdd96b,#feea6f)"></div>
<div class="abs" style="left:292px;top:116px;width:1625px;height:1px;background:#a9a9a9"></div>
<div class="abs" style="left:460px;top:68px;width:1px;height:48px;background:#a9a9a9"></div>
<div class="abs" style="left:741px;top:68px;width:1px;height:48px;background:#a9a9a9"></div>
<div class="abs" style="left:876px;top:68px;width:1px;height:48px;background:#a9a9a9"></div>
<div class="abs" style="left:999px;top:68px;width:1px;height:48px;background:#a9a9a9"></div>
<div class="abs" style="left:1089px;top:68px;width:1px;height:48px;background:#a9a9a9"></div>
<div class="abs" style="left:1258px;top:68px;width:1px;height:48px;background:#a9a9a9"></div>
<div class="abs" style="left:1370px;top:68px;width:1px;height:48px;background:#a9a9a9"></div>
<div class="abs" style="left:1566px;top:68px;width:1px;height:48px;background:#a9a9a9"></div>
<div class="abs" style="left:1692px;top:68px;width:1px;height:48px;background:#a9a9a9"></div>
<div class="abs" style="left:1827px;top:68px;width:1px;height:48px;background:#a9a9a9"></div>
<div class="t" style="left:296px;top:81.23px;font-size:17.8px;line-height:22px;letter-spacing:-0.261px">User name</div>
<div class="t" style="left:466px;top:81.23px;font-size:17.8px;line-height:22px;letter-spacing:-0.172px">Full name</div>
<div class="t" style="left:746px;top:81.23px;font-size:17.8px;line-height:22px;letter-spacing:-0.138px">Employee code</div>
<div class="t" style="left:881px;top:70.63px;font-size:17.8px;line-height:22px;letter-spacing:-0.012px">Data lock by</div>
<div class="t" style="left:881px;top:93.13px;font-size:17.8px;line-height:22px;letter-spacing:-0.481px">user</div>
<div class="t" style="left:1004px;top:81.23px;font-size:17.8px;line-height:22px;letter-spacing:-0.154px">Lock date</div>
<div class="t" style="left:1094px;top:81.23px;font-size:17.8px;line-height:22px;letter-spacing:0.104px">Platform</div>
<div class="t" style="left:1262px;top:70.63px;font-size:17.8px;line-height:22px;letter-spacing:0.216px">Authenticati</div>
<div class="t" style="left:1262px;top:93.13px;font-size:17.8px;line-height:22px;letter-spacing:0.332px">on method</div>
<div class="t" style="left:1375px;top:81.23px;font-size:17.8px;line-height:22px;letter-spacing:-0.562px">Email</div>
<div class="t" style="left:1571px;top:81.23px;font-size:17.8px;line-height:22px;letter-spacing:-0.718px">Tel</div>
<div class="t" style="left:1697px;top:81.23px;font-size:17.8px;line-height:22px;letter-spacing:-0.038px">Customer code</div>
<div class="t" style="left:1832px;top:81.23px;font-size:17.8px;line-height:22px;letter-spacing:0.150px;color:#c4c4c4;font-style:italic">ID</div>
<div class="abs" style="left:292px;top:117px;width:1625px;height:28px;background:#ffffff"></div>
<div class="abs" style="left:292px;top:145px;width:1625px;height:1px;background:#dcdcdc"></div>
<div class="abs" style="left:460px;top:117px;width:1px;height:28px;background:#dcdcdc"></div>
<div class="abs" style="left:741px;top:117px;width:1px;height:28px;background:#dcdcdc"></div>
<div class="abs" style="left:876px;top:117px;width:1px;height:28px;background:#dcdcdc"></div>
<div class="abs" style="left:999px;top:117px;width:1px;height:28px;background:#dcdcdc"></div>
<div class="abs" style="left:1089px;top:117px;width:1px;height:28px;background:#dcdcdc"></div>
<div class="abs" style="left:1258px;top:117px;width:1px;height:28px;background:#dcdcdc"></div>
<div class="abs" style="left:1370px;top:117px;width:1px;height:28px;background:#dcdcdc"></div>
<div class="abs" style="left:1566px;top:117px;width:1px;height:28px;background:#dcdcdc"></div>
<div class="abs" style="left:1692px;top:117px;width:1px;height:28px;background:#dcdcdc"></div>
<div class="abs" style="left:1827px;top:117px;width:1px;height:28px;background:#dcdcdc"></div>
<svg class="abs" style="left:297px;top:123px" width="12" height="12" viewBox="0 0 12 12">
<rect x="-0.6" y="-0.6" width="12.4" height="13.2" fill="#fff" opacity="0.9"/>
<rect x="0" y="0" width="11.2" height="12" rx="0.4" fill="#454545"/>
<rect x="1" y="2.4" width="9.2" height="1.6" fill="#fff"/>
<rect x="1" y="4.9" width="4.2" height="3" fill="#fff"/>
<rect x="6" y="4.9" width="4.2" height="3" fill="#fff"/>
<rect x="1.8" y="6" width="2.6" height="0.9" fill="#454545"/>
<rect x="6.8" y="6" width="2.6" height="0.9" fill="#454545"/>
<rect x="1" y="8.8" width="4.2" height="2.2" fill="#d4d4d4"/>
<rect x="6" y="8.8" width="4.2" height="2.2" fill="#d4d4d4"/>
</svg>
<div class="t" style="left:312px;top:122.83px;font-size:17.8px;line-height:22px">-</div>
<div class="t" style="left:466px;top:122.83px;font-size:17.8px;line-height:22px">-</div>
<div class="t" style="left:1095px;top:122.83px;font-size:17.8px;line-height:22px;letter-spacing:-0.817px">1,2,4</div>
<div class="t" style="left:1800px;width:115.5px;text-align:right;top:122.80px;font-size:17.8px;line-height:22px;letter-spacing:-0.6px;color:#b2b2b2">1083</div>
<div class="abs" style="left:932px;top:123px;width:13px;height:13px;background:#fff;border:1px solid #727272;border-radius:2.5px"></div>
<div class="abs" style="left:292px;top:146px;width:1625px;height:27px;background:#ebf1fc"></div>
<div class="abs" style="left:292px;top:173px;width:1625px;height:1px;background:#dcdcdc"></div>
<div class="abs" style="left:460px;top:146px;width:1px;height:27px;background:#dcdcdc"></div>
<div class="abs" style="left:741px;top:146px;width:1px;height:27px;background:#dcdcdc"></div>
<div class="abs" style="left:876px;top:146px;width:1px;height:27px;background:#dcdcdc"></div>
<div class="abs" style="left:999px;top:146px;width:1px;height:27px;background:#dcdcdc"></div>
<div class="abs" style="left:1089px;top:146px;width:1px;height:27px;background:#dcdcdc"></div>
<div class="abs" style="left:1258px;top:146px;width:1px;height:27px;background:#dcdcdc"></div>
<div class="abs" style="left:1370px;top:146px;width:1px;height:27px;background:#dcdcdc"></div>
<div class="abs" style="left:1566px;top:146px;width:1px;height:27px;background:#dcdcdc"></div>
<div class="abs" style="left:1692px;top:146px;width:1px;height:27px;background:#dcdcdc"></div>
<div class="abs" style="left:1827px;top:146px;width:1px;height:27px;background:#dcdcdc"></div>
<svg class="abs" style="left:297px;top:152px" width="12" height="12" viewBox="0 0 12 12">
<rect x="-0.6" y="-0.6" width="12.4" height="13.2" fill="#fff" opacity="0.9"/>
<rect x="0" y="0" width="11.2" height="12" rx="0.4" fill="#454545"/>
<rect x="1" y="2.4" width="9.2" height="1.6" fill="#fff"/>
<rect x="1" y="4.9" width="4.2" height="3" fill="#fff"/>
<rect x="6" y="4.9" width="4.2" height="3" fill="#fff"/>
<rect x="1.8" y="6" width="2.6" height="0.9" fill="#454545"/>
<rect x="6.8" y="6" width="2.6" height="0.9" fill="#454545"/>
<rect x="1" y="8.8" width="4.2" height="2.2" fill="#d4d4d4"/>
<rect x="6" y="8.8" width="4.2" height="2.2" fill="#d4d4d4"/>
</svg>
<div class="t" style="left:312px;top:150.83px;font-size:17.8px;line-height:22px;letter-spacing:-0.884px">ADMINISTRATORS</div>
<div class="t" style="left:466px;top:150.83px;font-size:17.8px;line-height:22px;letter-spacing:0.218px">Administrator Group</div>
<div class="t" style="left:1095px;top:150.83px;font-size:17.8px;line-height:22px;letter-spacing:-0.817px">1,2,4</div>
<div class="t" style="left:1800px;width:115.5px;text-align:right;top:150.80px;font-size:17.8px;line-height:22px;letter-spacing:0px;color:#b2b2b2">2</div>
<div class="abs" style="left:932px;top:152px;width:13px;height:13px;background:#fff;border:1px solid #727272;border-radius:2.5px"></div>
<div class="abs" style="left:292px;top:174px;width:1625px;height:27px;background:#ffffff"></div>
<div class="abs" style="left:292px;top:201px;width:1625px;height:1px;background:#dcdcdc"></div>
<div class="abs" style="left:460px;top:174px;width:1px;height:27px;background:#dcdcdc"></div>
<div class="abs" style="left:741px;top:174px;width:1px;height:27px;background:#dcdcdc"></div>
<div class="abs" style="left:876px;top:174px;width:1px;height:27px;background:#dcdcdc"></div>
<div class="abs" style="left:999px;top:174px;width:1px;height:27px;background:#dcdcdc"></div>
<div class="abs" style="left:1089px;top:174px;width:1px;height:27px;background:#dcdcdc"></div>
<div class="abs" style="left:1258px;top:174px;width:1px;height:27px;background:#dcdcdc"></div>
<div class="abs" style="left:1370px;top:174px;width:1px;height:27px;background:#dcdcdc"></div>
<div class="abs" style="left:1566px;top:174px;width:1px;height:27px;background:#dcdcdc"></div>
<div class="abs" style="left:1692px;top:174px;width:1px;height:27px;background:#dcdcdc"></div>
<div class="abs" style="left:1827px;top:174px;width:1px;height:27px;background:#dcdcdc"></div>
<svg class="abs" style="left:297px;top:180px" width="12" height="12" viewBox="0 0 12 12">
<rect x="-0.6" y="-0.6" width="12.4" height="13.2" fill="#fff" opacity="0.9"/>
<rect x="0" y="0" width="11.2" height="12" rx="0.4" fill="#454545"/>
<rect x="1" y="2.4" width="9.2" height="1.6" fill="#fff"/>
<rect x="1" y="4.9" width="4.2" height="3" fill="#fff"/>
<rect x="6" y="4.9" width="4.2" height="3" fill="#fff"/>
<rect x="1.8" y="6" width="2.6" height="0.9" fill="#454545"/>
<rect x="6.8" y="6" width="2.6" height="0.9" fill="#454545"/>
<rect x="1" y="8.8" width="4.2" height="2.2" fill="#d4d4d4"/>
<rect x="6" y="8.8" width="4.2" height="2.2" fill="#d4d4d4"/>
</svg>
<div class="t" style="left:312px;top:178.83px;font-size:17.8px;line-height:22px;letter-spacing:-1.358px">BGD</div>
<div class="t" style="left:466px;top:178.83px;font-size:17.8px;line-height:22px;letter-spacing:0.262px">Director</div>
<div class="t" style="left:1095px;top:178.83px;font-size:17.8px;line-height:22px;letter-spacing:-1.047px">1,2</div>
<div class="t" style="left:1800px;width:115.5px;text-align:right;top:178.80px;font-size:17.8px;line-height:22px;letter-spacing:0px;color:#b2b2b2">9</div>
<div class="abs" style="left:932px;top:180px;width:13px;height:13px;background:#fff;border:1px solid #727272;border-radius:2.5px"></div>
<div class="abs" style="left:292px;top:202px;width:1625px;height:28px;background:#ebf1fc"></div>
<div class="abs" style="left:292px;top:230px;width:1625px;height:1px;background:#dcdcdc"></div>
<div class="abs" style="left:460px;top:202px;width:1px;height:28px;background:#dcdcdc"></div>
<div class="abs" style="left:741px;top:202px;width:1px;height:28px;background:#dcdcdc"></div>
<div class="abs" style="left:876px;top:202px;width:1px;height:28px;background:#dcdcdc"></div>
<div class="abs" style="left:999px;top:202px;width:1px;height:28px;background:#dcdcdc"></div>
<div class="abs" style="left:1089px;top:202px;width:1px;height:28px;background:#dcdcdc"></div>
<div class="abs" style="left:1258px;top:202px;width:1px;height:28px;background:#dcdcdc"></div>
<div class="abs" style="left:1370px;top:202px;width:1px;height:28px;background:#dcdcdc"></div>
<div class="abs" style="left:1566px;top:202px;width:1px;height:28px;background:#dcdcdc"></div>
<div class="abs" style="left:1692px;top:202px;width:1px;height:28px;background:#dcdcdc"></div>
<div class="abs" style="left:1827px;top:202px;width:1px;height:28px;background:#dcdcdc"></div>
<svg class="abs" style="left:297px;top:208px" width="12" height="12" viewBox="0 0 12 12">
<rect x="-0.6" y="-0.6" width="12.4" height="13.2" fill="#fff" opacity="0.9"/>
<rect x="0" y="0" width="11.2" height="12" rx="0.4" fill="#454545"/>
<rect x="1" y="2.4" width="9.2" height="1.6" fill="#fff"/>
<rect x="1" y="4.9" width="4.2" height="3" fill="#fff"/>
<rect x="6" y="4.9" width="4.2" height="3" fill="#fff"/>
<rect x="1.8" y="6" width="2.6" height="0.9" fill="#454545"/>
<rect x="6.8" y="6" width="2.6" height="0.9" fill="#454545"/>
<rect x="1" y="8.8" width="4.2" height="2.2" fill="#d4d4d4"/>
<rect x="6" y="8.8" width="4.2" height="2.2" fill="#d4d4d4"/>
</svg>
<div class="t" style="left:312px;top:207.83px;font-size:17.8px;line-height:22px;letter-spacing:-1.260px">BRAVO</div>
<div class="t" style="left:466px;top:207.83px;font-size:17.8px;line-height:22px;letter-spacing:-1.260px">BRAVO</div>
<div class="t" style="left:1095px;top:207.83px;font-size:17.8px;line-height:22px;letter-spacing:-1.047px">1,2</div>
<div class="t" style="left:1800px;width:115.5px;text-align:right;top:207.80px;font-size:17.8px;line-height:22px;letter-spacing:-0.6px;color:#b2b2b2">1055</div>
<div class="abs" style="left:932px;top:208px;width:13px;height:13px;background:#fff;border:1px solid #727272;border-radius:2.5px"></div>
<div class="abs" style="left:292px;top:231px;width:1625px;height:27px;background:#ffffff"></div>
<div class="abs" style="left:292px;top:258px;width:1625px;height:1px;background:#dcdcdc"></div>
<div class="abs" style="left:460px;top:231px;width:1px;height:27px;background:#dcdcdc"></div>
<div class="abs" style="left:741px;top:231px;width:1px;height:27px;background:#dcdcdc"></div>
<div class="abs" style="left:876px;top:231px;width:1px;height:27px;background:#dcdcdc"></div>
<div class="abs" style="left:999px;top:231px;width:1px;height:27px;background:#dcdcdc"></div>
<div class="abs" style="left:1089px;top:231px;width:1px;height:27px;background:#dcdcdc"></div>
<div class="abs" style="left:1258px;top:231px;width:1px;height:27px;background:#dcdcdc"></div>
<div class="abs" style="left:1370px;top:231px;width:1px;height:27px;background:#dcdcdc"></div>
<div class="abs" style="left:1566px;top:231px;width:1px;height:27px;background:#dcdcdc"></div>
<div class="abs" style="left:1692px;top:231px;width:1px;height:27px;background:#dcdcdc"></div>
<div class="abs" style="left:1827px;top:231px;width:1px;height:27px;background:#dcdcdc"></div>
<svg class="abs" style="left:297px;top:237px" width="12" height="12" viewBox="0 0 12 12">
<rect x="-0.6" y="-0.6" width="12.4" height="13.2" fill="#fff" opacity="0.9"/>
<rect x="0" y="0" width="11.2" height="12" rx="0.4" fill="#454545"/>
<rect x="1" y="2.4" width="9.2" height="1.6" fill="#fff"/>
<rect x="1" y="4.9" width="4.2" height="3" fill="#fff"/>
<rect x="6" y="4.9" width="4.2" height="3" fill="#fff"/>
<rect x="1.8" y="6" width="2.6" height="0.9" fill="#454545"/>
<rect x="6.8" y="6" width="2.6" height="0.9" fill="#454545"/>
<rect x="1" y="8.8" width="4.2" height="2.2" fill="#d4d4d4"/>
<rect x="6" y="8.8" width="4.2" height="2.2" fill="#d4d4d4"/>
</svg>
<div class="t" style="left:312px;top:235.83px;font-size:17.8px;line-height:22px;letter-spacing:0.040px">company</div>
<div class="t" style="left:466px;top:235.83px;font-size:17.8px;line-height:22px;letter-spacing:0.040px">company</div>
<div class="t" style="left:1095px;top:235.83px;font-size:17.8px;line-height:22px;letter-spacing:-1.047px">1,2</div>
<div class="t" style="left:1800px;width:115.5px;text-align:right;top:235.80px;font-size:17.8px;line-height:22px;letter-spacing:-0.6px;color:#b2b2b2">1064</div>
<div class="abs" style="left:932px;top:237px;width:13px;height:13px;background:#fff;border:1px solid #727272;border-radius:2.5px"></div>
<div class="abs" style="left:292px;top:259px;width:1625px;height:27px;background:#cce8ff"></div>
<div class="abs" style="left:292px;top:286px;width:1625px;height:1px;background:#99d1ff"></div>
<div class="abs" style="left:292px;top:259px;width:168px;height:27px;background:#0384c7"></div>
<div class="abs" style="left:460px;top:259px;width:1px;height:27px;background:#99d1ff"></div>
<div class="abs" style="left:741px;top:259px;width:1px;height:27px;background:#99d1ff"></div>
<div class="abs" style="left:876px;top:259px;width:1px;height:27px;background:#99d1ff"></div>
<div class="abs" style="left:999px;top:259px;width:1px;height:27px;background:#99d1ff"></div>
<div class="abs" style="left:1089px;top:259px;width:1px;height:27px;background:#99d1ff"></div>
<div class="abs" style="left:1258px;top:259px;width:1px;height:27px;background:#99d1ff"></div>
<div class="abs" style="left:1370px;top:259px;width:1px;height:27px;background:#99d1ff"></div>
<div class="abs" style="left:1566px;top:259px;width:1px;height:27px;background:#99d1ff"></div>
<div class="abs" style="left:1692px;top:259px;width:1px;height:27px;background:#99d1ff"></div>
<div class="abs" style="left:1827px;top:259px;width:1px;height:27px;background:#99d1ff"></div>
<svg class="abs" style="left:297px;top:265px" width="12" height="12" viewBox="0 0 12 12">
<rect x="-0.6" y="-0.6" width="12.4" height="13.2" fill="#fff" opacity="0.9"/>
<rect x="0" y="0" width="11.2" height="12" rx="0.4" fill="#454545"/>
<rect x="1" y="2.4" width="9.2" height="1.6" fill="#fff"/>
<rect x="1" y="4.9" width="4.2" height="3" fill="#fff"/>
<rect x="6" y="4.9" width="4.2" height="3" fill="#fff"/>
<rect x="1.8" y="6" width="2.6" height="0.9" fill="#454545"/>
<rect x="6.8" y="6" width="2.6" height="0.9" fill="#454545"/>
<rect x="1" y="8.8" width="4.2" height="2.2" fill="#d4d4d4"/>
<rect x="6" y="8.8" width="4.2" height="2.2" fill="#d4d4d4"/>
</svg>
<div class="t" style="left:312px;top:263.83px;font-size:17.8px;line-height:22px;letter-spacing:-1.164px;color:#fff">KD</div>
<div class="t" style="left:466px;top:263.83px;font-size:17.8px;line-height:22px;letter-spacing:-0.069px">Sales department</div>
<div class="t" style="left:1095px;top:263.83px;font-size:17.8px;line-height:22px;letter-spacing:-1.047px">1,2</div>
<div class="t" style="left:1800px;width:115.5px;text-align:right;top:263.80px;font-size:17.8px;line-height:22px;letter-spacing:0px;color:#b2b2b2">5</div>
<div class="abs" style="left:932px;top:265px;width:13px;height:13px;background:#fff;border:1px solid #727272;border-radius:2.5px"></div>
<div class="abs" style="left:292px;top:287px;width:1625px;height:27px;background:#ffffff"></div>
<div class="abs" style="left:292px;top:314px;width:1625px;height:1px;background:#dcdcdc"></div>
<div class="abs" style="left:460px;top:287px;width:1px;height:27px;background:#dcdcdc"></div>
<div class="abs" style="left:741px;top:287px;width:1px;height:27px;background:#dcdcdc"></div>
<div class="abs" style="left:876px;top:287px;width:1px;height:27px;background:#dcdcdc"></div>
<div class="abs" style="left:999px;top:287px;width:1px;height:27px;background:#dcdcdc"></div>
<div class="abs" style="left:1089px;top:287px;width:1px;height:27px;background:#dcdcdc"></div>
<div class="abs" style="left:1258px;top:287px;width:1px;height:27px;background:#dcdcdc"></div>
<div class="abs" style="left:1370px;top:287px;width:1px;height:27px;background:#dcdcdc"></div>
<div class="abs" style="left:1566px;top:287px;width:1px;height:27px;background:#dcdcdc"></div>
<div class="abs" style="left:1692px;top:287px;width:1px;height:27px;background:#dcdcdc"></div>
<div class="abs" style="left:1827px;top:287px;width:1px;height:27px;background:#dcdcdc"></div>
<svg class="abs" style="left:297px;top:293px" width="12" height="12" viewBox="0 0 12 12">
<rect x="-0.6" y="-0.6" width="12.4" height="13.2" fill="#fff" opacity="0.9"/>
<rect x="0" y="0" width="11.2" height="12" rx="0.4" fill="#454545"/>
<rect x="1" y="2.4" width="9.2" height="1.6" fill="#fff"/>
<rect x="1" y="4.9" width="4.2" height="3" fill="#fff"/>
<rect x="6" y="4.9" width="4.2" height="3" fill="#fff"/>
<rect x="1.8" y="6" width="2.6" height="0.9" fill="#454545"/>
<rect x="6.8" y="6" width="2.6" height="0.9" fill="#454545"/>
<rect x="1" y="8.8" width="4.2" height="2.2" fill="#d4d4d4"/>
<rect x="6" y="8.8" width="4.2" height="2.2" fill="#d4d4d4"/>
</svg>
<div class="t" style="left:312px;top:291.83px;font-size:17.8px;line-height:22px;letter-spacing:-1.823px">KT</div>
<div class="t" style="left:466px;top:291.83px;font-size:17.8px;line-height:22px;letter-spacing:0.223px">Account department</div>
<div class="t" style="left:1095px;top:291.83px;font-size:17.8px;line-height:22px;letter-spacing:-1.047px">1,2</div>
<div class="t" style="left:1800px;width:115.5px;text-align:right;top:291.80px;font-size:17.8px;line-height:22px;letter-spacing:0px;color:#b2b2b2">6</div>
<div class="abs" style="left:932px;top:293px;width:13px;height:13px;background:#fff;border:1px solid #727272;border-radius:2.5px"></div>
<div class="abs" style="left:292px;top:315px;width:1625px;height:28px;background:#ebf1fc"></div>
<div class="abs" style="left:292px;top:343px;width:1625px;height:1px;background:#dcdcdc"></div>
<div class="abs" style="left:460px;top:315px;width:1px;height:28px;background:#dcdcdc"></div>
<div class="abs" style="left:741px;top:315px;width:1px;height:28px;background:#dcdcdc"></div>
<div class="abs" style="left:876px;top:315px;width:1px;height:28px;background:#dcdcdc"></div>
<div class="abs" style="left:999px;top:315px;width:1px;height:28px;background:#dcdcdc"></div>
<div class="abs" style="left:1089px;top:315px;width:1px;height:28px;background:#dcdcdc"></div>
<div class="abs" style="left:1258px;top:315px;width:1px;height:28px;background:#dcdcdc"></div>
<div class="abs" style="left:1370px;top:315px;width:1px;height:28px;background:#dcdcdc"></div>
<div class="abs" style="left:1566px;top:315px;width:1px;height:28px;background:#dcdcdc"></div>
<div class="abs" style="left:1692px;top:315px;width:1px;height:28px;background:#dcdcdc"></div>
<div class="abs" style="left:1827px;top:315px;width:1px;height:28px;background:#dcdcdc"></div>
<svg class="abs" style="left:297px;top:321px" width="12" height="12" viewBox="0 0 12 12">
<rect x="-0.6" y="-0.6" width="12.4" height="13.2" fill="#fff" opacity="0.9"/>
<rect x="0" y="0" width="11.2" height="12" rx="0.4" fill="#454545"/>
<rect x="1" y="2.4" width="9.2" height="1.6" fill="#fff"/>
<rect x="1" y="4.9" width="4.2" height="3" fill="#fff"/>
<rect x="6" y="4.9" width="4.2" height="3" fill="#fff"/>
<rect x="1.8" y="6" width="2.6" height="0.9" fill="#454545"/>
<rect x="6.8" y="6" width="2.6" height="0.9" fill="#454545"/>
<rect x="1" y="8.8" width="4.2" height="2.2" fill="#d4d4d4"/>
<rect x="6" y="8.8" width="4.2" height="2.2" fill="#d4d4d4"/>
</svg>
<div class="t" style="left:312px;top:320.83px;font-size:17.8px;line-height:22px;letter-spacing:-1.345px">PORTAL</div>
<div class="t" style="left:466px;top:320.83px;font-size:17.8px;line-height:22px;letter-spacing:-1.345px">PORTAL</div>
<div class="t" style="left:1095px;top:320.83px;font-size:17.8px;line-height:22px;letter-spacing:-1.047px">1,2</div>
<div class="t" style="left:1800px;width:115.5px;text-align:right;top:320.80px;font-size:17.8px;line-height:22px;letter-spacing:-0.6px;color:#b2b2b2">1015</div>
<div class="abs" style="left:932px;top:321px;width:13px;height:13px;background:#fff;border:1px solid #727272;border-radius:2.5px"></div>
<div class="abs" style="left:292px;top:344px;width:1625px;height:27px;background:#ffffff"></div>
<div class="abs" style="left:292px;top:371px;width:1625px;height:1px;background:#dcdcdc"></div>
<div class="abs" style="left:460px;top:344px;width:1px;height:27px;background:#dcdcdc"></div>
<div class="abs" style="left:741px;top:344px;width:1px;height:27px;background:#dcdcdc"></div>
<div class="abs" style="left:876px;top:344px;width:1px;height:27px;background:#dcdcdc"></div>
<div class="abs" style="left:999px;top:344px;width:1px;height:27px;background:#dcdcdc"></div>
<div class="abs" style="left:1089px;top:344px;width:1px;height:27px;background:#dcdcdc"></div>
<div class="abs" style="left:1258px;top:344px;width:1px;height:27px;background:#dcdcdc"></div>
<div class="abs" style="left:1370px;top:344px;width:1px;height:27px;background:#dcdcdc"></div>
<div class="abs" style="left:1566px;top:344px;width:1px;height:27px;background:#dcdcdc"></div>
<div class="abs" style="left:1692px;top:344px;width:1px;height:27px;background:#dcdcdc"></div>
<div class="abs" style="left:1827px;top:344px;width:1px;height:27px;background:#dcdcdc"></div>
<svg class="abs" style="left:297px;top:350px" width="12" height="12" viewBox="0 0 12 12">
<rect x="-0.6" y="-0.6" width="12.4" height="13.2" fill="#fff" opacity="0.9"/>
<rect x="0" y="0" width="11.2" height="12" rx="0.4" fill="#454545"/>
<rect x="1" y="2.4" width="9.2" height="1.6" fill="#fff"/>
<rect x="1" y="4.9" width="4.2" height="3" fill="#fff"/>
<rect x="6" y="4.9" width="4.2" height="3" fill="#fff"/>
<rect x="1.8" y="6" width="2.6" height="0.9" fill="#454545"/>
<rect x="6.8" y="6" width="2.6" height="0.9" fill="#454545"/>
<rect x="1" y="8.8" width="4.2" height="2.2" fill="#d4d4d4"/>
<rect x="6" y="8.8" width="4.2" height="2.2" fill="#d4d4d4"/>
</svg>
<div class="t" style="left:312px;top:348.83px;font-size:17.8px;line-height:22px;letter-spacing:-1.564px">PURCHASE</div>
<div class="t" style="left:466px;top:348.83px;font-size:17.8px;line-height:22px;letter-spacing:0.056px">Purchasing department</div>
<div class="t" style="left:1095px;top:348.83px;font-size:17.8px;line-height:22px;letter-spacing:-1.047px">1,2</div>
<div class="t" style="left:1800px;width:115.5px;text-align:right;top:348.80px;font-size:17.8px;line-height:22px;letter-spacing:0px;color:#b2b2b2">7</div>
<div class="abs" style="left:932px;top:350px;width:13px;height:13px;background:#fff;border:1px solid #727272;border-radius:2.5px"></div>
<div class="abs" style="left:292px;top:372px;width:1625px;height:27px;background:#ebf1fc"></div>
<div class="abs" style="left:292px;top:399px;width:1625px;height:1px;background:#dcdcdc"></div>
<div class="abs" style="left:460px;top:372px;width:1px;height:27px;background:#dcdcdc"></div>
<div class="abs" style="left:741px;top:372px;width:1px;height:27px;background:#dcdcdc"></div>
<div class="abs" style="left:876px;top:372px;width:1px;height:27px;background:#dcdcdc"></div>
<div class="abs" style="left:999px;top:372px;width:1px;height:27px;background:#dcdcdc"></div>
<div class="abs" style="left:1089px;top:372px;width:1px;height:27px;background:#dcdcdc"></div>
<div class="abs" style="left:1258px;top:372px;width:1px;height:27px;background:#dcdcdc"></div>
<div class="abs" style="left:1370px;top:372px;width:1px;height:27px;background:#dcdcdc"></div>
<div class="abs" style="left:1566px;top:372px;width:1px;height:27px;background:#dcdcdc"></div>
<div class="abs" style="left:1692px;top:372px;width:1px;height:27px;background:#dcdcdc"></div>
<div class="abs" style="left:1827px;top:372px;width:1px;height:27px;background:#dcdcdc"></div>
<svg class="abs" style="left:297px;top:378px" width="12" height="12" viewBox="0 0 12 12">
<rect x="-0.6" y="-0.6" width="12.4" height="13.2" fill="#fff" opacity="0.9"/>
<rect x="0" y="0" width="11.2" height="12" rx="0.4" fill="#454545"/>
<rect x="1" y="2.4" width="9.2" height="1.6" fill="#fff"/>
<rect x="1" y="4.9" width="4.2" height="3" fill="#fff"/>
<rect x="6" y="4.9" width="4.2" height="3" fill="#fff"/>
<rect x="1.8" y="6" width="2.6" height="0.9" fill="#454545"/>
<rect x="6.8" y="6" width="2.6" height="0.9" fill="#454545"/>
<rect x="1" y="8.8" width="4.2" height="2.2" fill="#d4d4d4"/>
<rect x="6" y="8.8" width="4.2" height="2.2" fill="#d4d4d4"/>
</svg>
<div class="t" style="left:312px;top:376.83px;font-size:17.8px;line-height:22px;letter-spacing:-1.261px">WAREHOUSE</div>
<div class="t" style="left:466px;top:376.83px;font-size:17.8px;line-height:22px;letter-spacing:0.103px">Warehouse department</div>
<div class="t" style="left:1095px;top:376.83px;font-size:17.8px;line-height:22px;letter-spacing:-1.047px">1,2</div>
<div class="t" style="left:1800px;width:115.5px;text-align:right;top:376.80px;font-size:17.8px;line-height:22px;letter-spacing:-0.6px;color:#b2b2b2">1032</div>
<div class="abs" style="left:932px;top:378px;width:13px;height:13px;background:#fff;border:1px solid #727272;border-radius:2.5px"></div>
<div class="abs" style="left:292px;top:467px;width:1625px;height:22px;background:#f0f0f0"></div>
<div class="abs" style="left:313px;top:470px;width:1584px;height:17px;background:#c1c1c1"></div>
<svg class="abs" style="left:299px;top:474px" width="7" height="10" viewBox="0 0 7 10"><path d="M6 0 L0.5 4.6 L6 9.2 Z" fill="#a6a6a6"/></svg>
<svg class="abs" style="left:1906px;top:474px" width="7" height="10" viewBox="0 0 7 10"><path d="M0.5 0 L6 4.6 L0.5 9.2 Z" fill="#505050"/></svg>
<svg class="abs" style="left:1100px;top:490px" width="14" height="2" viewBox="0 0 14 2"><rect x="0" y="0" width="1" height="1" fill="#bbb"/><rect x="2" y="0" width="1" height="1" fill="#bbb"/><rect x="4" y="0" width="1" height="1" fill="#bbb"/><rect x="6" y="0" width="1" height="1" fill="#bbb"/><rect x="8" y="0" width="1" height="1" fill="#bbb"/><rect x="10" y="0" width="1" height="1" fill="#bbb"/><rect x="12" y="0" width="1" height="1" fill="#bbb"/></svg>
<div class="abs" style="left:292px;top:493px;width:837px;height:1px;background:#d9d9d9"></div>
<div class="abs" style="left:1129px;top:493px;width:788px;height:33px;background:#f0f0f0"></div>
<div class="abs" style="left:292px;top:525px;width:1625px;height:1px;background:#c8c8c8"></div>
<div class="abs" style="left:292px;top:494px;width:84px;height:32px;background:#ffffff"></div>
<div class="abs" style="left:292px;top:494px;width:1px;height:31px;background:#d0d0d0"></div>
<div class="t" style="left:300px;top:500.23px;font-size:17.8px;line-height:22px;letter-spacing:-0.167px">User role</div>
<div class="abs" style="left:377px;top:494px;width:221px;height:31px;background:#f0f0f0"></div>
<div class="abs" style="left:377px;top:494px;width:1px;height:31px;background:#d0d0d0"></div>
<div class="t" style="left:384px;top:500.23px;font-size:17.8px;line-height:22px;letter-spacing:0.085px">Document processing role</div>
<div class="abs" style="left:599px;top:494px;width:316px;height:31px;background:#f0f0f0"></div>
<div class="abs" style="left:599px;top:494px;width:1px;height:31px;background:#d0d0d0"></div>
<div class="t" style="left:606px;top:500.23px;font-size:17.8px;line-height:22px;letter-spacing:-0.220px">List of warehouses the user has access</div>
<div class="abs" style="left:916px;top:494px;width:213px;height:31px;background:#f0f0f0"></div>
<div class="abs" style="left:916px;top:494px;width:1px;height:31px;background:#d0d0d0"></div>
<div class="t" style="left:923px;top:500.23px;font-size:17.8px;line-height:22px;letter-spacing:0.163px">Default branch on mobile</div>
<div class="abs" style="left:1129px;top:494px;width:1px;height:31px;background:#d0d0d0"></div>
<svg class="abs" style="left:1878px;top:504px" width="10" height="10" viewBox="0 0 10 10"><rect x="0.6" y="0.6" width="8.2" height="8.2" rx="1" fill="#fff" stroke="#8a8a8a" stroke-width="1.1"/><rect x="4.8" y="0.6" width="4" height="8.2" fill="#333"/></svg>
<div class="abs" style="left:1903px;top:508px;width:9px;height:2px;background:#333"></div>
<div class="abs" style="left:292px;top:526px;width:319px;height:28px;background:linear-gradient(#fdd96b,#feea6f)"></div>
<div class="abs" style="left:292px;top:554px;width:319px;height:1px;background:#a9a9a9"></div>
<div class="t" style="left:296px;top:529.63px;font-size:17.8px;line-height:22px;letter-spacing:-0.119px">User role name</div>
<div class="abs" style="left:292px;top:555px;width:319px;height:28px;background:#cce8fb"></div>
<div class="abs" style="left:292px;top:583px;width:319px;height:1px;background:#99d1f5"></div>
<div class="t" style="left:296px;top:560.63px;font-size:17.8px;line-height:22px;letter-spacing:0.342px">Administrator</div>
<div class="abs" style="left:292px;top:584px;width:319px;height:27px;background:#edf2fb"></div>
<div class="abs" style="left:292px;top:611px;width:319px;height:1px;background:#dcdcdc"></div>
<div class="t" style="left:296px;top:588.83px;font-size:17.8px;line-height:22px;letter-spacing:-0.061px">Layout Designer</div>
<div class="abs" style="left:611px;top:526px;width:1px;height:86px;background:#dcdcdc"></div>
<svg class="abs" style="left:289px;top:520px" width="3" height="16" viewBox="0 0 3 16"><rect x="0" y="0" width="3" height="1" fill="#c8c8c8"/><rect x="0" y="3" width="3" height="1" fill="#c8c8c8"/><rect x="0" y="6" width="3" height="1" fill="#c8c8c8"/><rect x="0" y="9" width="3" height="1" fill="#c8c8c8"/><rect x="0" y="12" width="3" height="1" fill="#c8c8c8"/><rect x="0" y="15" width="3" height="1" fill="#c8c8c8"/></svg>
<div class="abs" style="left:0;top:0;width:1918px;height:987px;border:1px solid #12a085;pointer-events:none"></div>
</body></html>
